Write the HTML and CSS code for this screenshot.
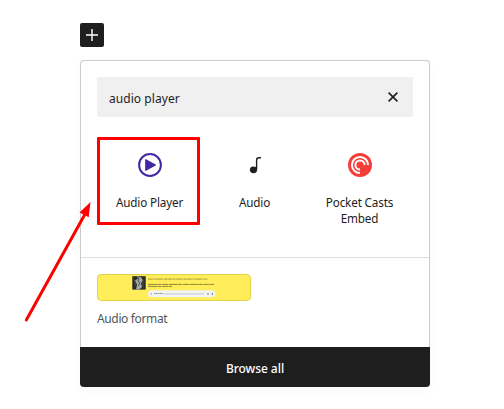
FILE: index.html
```html
<!DOCTYPE html>
<html lang="en">
<head>
<meta charset="utf-8">
<title>Block inserter</title>
<link rel="stylesheet" href="styles.css">
</head>
<body>
<main class="editor">
  <button class="toggle" aria-label="Add block">
    <svg width="24" height="24" viewBox="0 0 24 24"><path d="M12 6v12M6 12h12" stroke="#fff" stroke-width="1.4" fill="none"/></svg>
  </button>
  <section class="inserter">
    <div class="search">
      <span class="query">audio player</span>
      <svg class="clear" width="12" height="12" viewBox="0 0 12 12"><path d="M1.6 1.6l8.8 8.8M10.4 1.6l-8.8 8.8" stroke="#1e1e1e" stroke-width="1.6" fill="none"/></svg>
    </div>
    <div class="blocks">
      <div class="block">
        <svg width="24" height="24" viewBox="0 0 24 24"><circle cx="12" cy="12" r="10.9" fill="none" stroke="#4527a4" stroke-width="2"/><path d="M7.8 6.7v10.6L17.4 12z" fill="#4527a4" stroke="#4527a4" stroke-width="1.2" stroke-linejoin="round"/></svg>
        <span class="label">Audio Player</span>
      </div>
      <div class="block">
        <svg width="24" height="24" viewBox="0 0 24 24"><ellipse cx="10.5" cy="16.8" rx="3.6" ry="3.4" fill="#1e1e1e"/><path d="M13.6 16.6V7.2Q13.6 4.7 15.8 4.7H18" fill="none" stroke="#1e1e1e" stroke-width="1.4"/></svg>
        <span class="label">Audio</span>
      </div>
      <div class="block">
        <svg width="24" height="24" viewBox="0 0 24 24"><circle cx="12" cy="12" r="12" fill="#f43e37"/><path d="M12 20.1A8.1 8.1 0 1 1 20.1 12M12 16.6A4.6 4.6 0 1 1 16.6 12" fill="none" stroke="#fff" stroke-width="2"/></svg>
        <span class="label casts">Pocket Casts Embed</span>
      </div>
    </div>
    <div class="patterns">
      <svg class="preview" width="154" height="27" viewBox="0 0 154 27">
        <rect x=".5" y=".5" width="153" height="26" rx="3.5" fill="#ffed59" stroke="#e3d24e"/>
        <rect x="35.3" y="2.2" width="13.4" height="13.4" fill="#292b29"/>
        <path d="M40 2.2l4 1 2 3-2 3 1 4-3 2.4h-3l1-5-2-4 3-2z" fill="#a5aaa6"/>
        <path d="M42 3l-1 4 2 2-2 3M37 5l2 7M46 6v7" fill="none" stroke="#4b504c"/>
        <path d="M51 5.1h59.5" stroke="#6c652e" stroke-width=".6" stroke-dasharray="5 .7 2 .5 7 .8 3 .4"/>
        <path d="M51 10.4h66M51 12.4h24" stroke="#625b28" stroke-width=".7" stroke-dasharray="9 .5 4 .7 6 .5"/>
        <rect x="51" y="16.3" width="67.5" height="7" rx="3.5" fill="#f1f3f4"/>
        <path d="M53.8 19v2l1.2-1z" fill="#777"/>
        <path d="M57 19.5h9" stroke="#777" stroke-width=".8" stroke-dasharray="1.5 .4"/>
        <path d="M67 19.8h40" stroke="#cfd0d1" stroke-width="1.2"/>
        <path d="M111 19v1.8M115.3 18.8v2.2" stroke="#777a7b" stroke-width="1"/>
      </svg>
      <span class="caption">Audio format</span>
    </div>
    <button class="browse"><span>Browse all</span></button>
  </section>
  <div class="highlight"></div>
  <svg class="arrow" width="80" height="130" viewBox="0 0 80 130"><path d="M6.3 125L64.5 20" stroke="#f00" stroke-width="3" stroke-linecap="round"/><path d="M70.5 7L59.5 17.6l4 2 5.2 2.6z" fill="#f00"/></svg>
</main>
</body>
</html>
```
FILE: styles.css
```css
* { box-sizing: border-box; }
body { margin: 0; background: #fff; color: #1e1e1e; font: 12px/16px "Noto Sans", "Open Sans", sans-serif; }
.editor { position: relative; width: 504px; height: 409px; padding: 23px 74px 0 80px; overflow: hidden; }
button { border: 0; padding: 0; font: inherit; }
svg { display: block; flex: none; }
.toggle { display: block; width: 24px; height: 24px; margin-bottom: 13px; border-radius: 2px; background: #1e1e1e; }
.inserter { display: flex; flex-direction: column; width: 350px; height: 327px; border: 1px solid #ccc; border-bottom: 0; border-radius: 4px; box-shadow: 0 3px 9px rgba(0, 0, 0, .035); }
.search { display: flex; align-items: center; justify-content: space-between; height: 40px; margin: 16px 16px 0; padding: 0 14px 0 12px; border-radius: 2px; background: #f0f0f0; }
.query { padding-top: 3px; letter-spacing: .06px; }
.blocks { display: grid; grid-template-columns: repeat(3, 105px); height: 141px; padding: 20px 16px 0; border-bottom: 1px solid #ddd; }
.block { display: flex; flex-direction: column; align-items: center; padding-top: 16px; }
.label { margin-top: 17px; font-size: 11.7px; line-height: 16px; letter-spacing: -.15px; text-align: center; white-space: nowrap; }
.casts { width: 80px; white-space: normal; }
.patterns { flex: 1; padding: 16px 16px 0; }
.caption { display: block; margin-top: 10px; color: #50575e; letter-spacing: -.36px; }
.browse { height: 40px; margin: 0 -1px; border-radius: 0 0 4px 4px; background: #1e1e1e; color: #fff; font-weight: 500; padding-top: 4px; letter-spacing: -.05px; }
.highlight { position: absolute; left: 97px; top: 137px; width: 103px; height: 88px; border: 3px solid #f00; border-radius: 1px; }
.arrow { position: absolute; left: 20px; top: 195px; }
```
